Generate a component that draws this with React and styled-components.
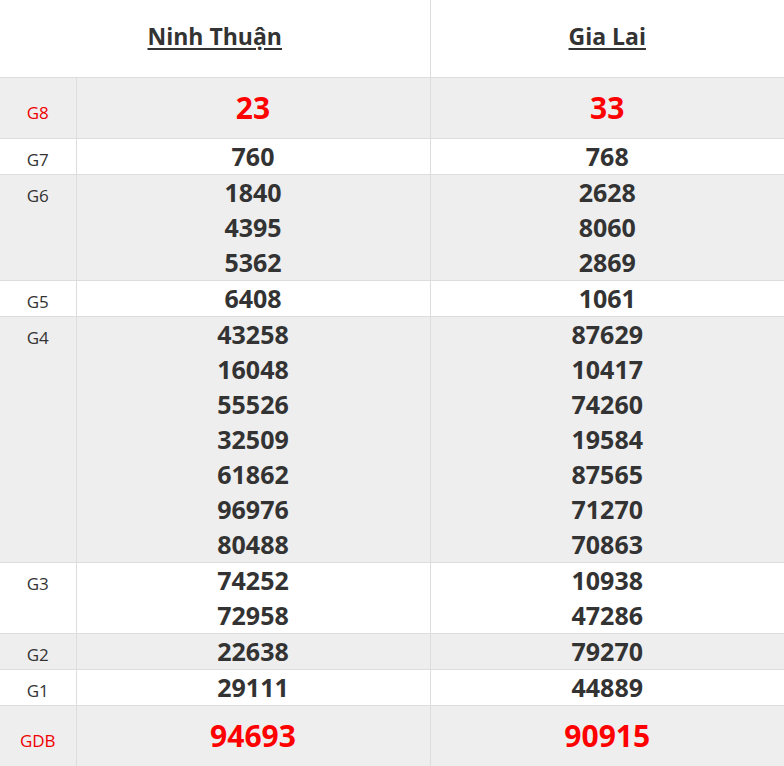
import React from 'react'
import styled, {createGlobalStyle} from 'styled-components'

// ====================== STYLED COMPONENTS ======================
const GlobalStyle = createGlobalStyle`
  html, body {
    margin: 0;
    padding: 0;
    background: #fff;
  }
  body {
    font-family: 'Open Sans', 'Liberation Sans', sans-serif;
    color: #333;
  }
`

const ResultTable = styled.table`
  width: 784px;
  border-collapse: collapse;
  table-layout: fixed;
`

const HeadCell = styled.th`
  height: 71px;
  padding: 0 0 6px;
  text-align: center;
  vertical-align: middle;
  font-size: 23px;
  font-weight: 700;
  color: #333;
  border-right: ${(p) => (p.$last ? 'none' : '1px solid #ddd')};
`

const Province = styled.span`
  text-decoration: underline;
  text-decoration-thickness: 2px;
  text-underline-offset: 3px;
  cursor: pointer;
`

const Row = styled.tr`
  background: ${(p) => (p.$shade ? '#eee' : '#fff')};
  border-top: 1px solid #ddd;
`

const Label = styled.td`
  padding: 0;
  text-align: center;
  vertical-align: baseline;
  font-size: 17px;
  line-height: 20px;
  color: ${(p) => (p.$hot ? '#e00' : '#333')};
  border-right: 1px solid #ddd;
`

const NumCell = styled.td`
  padding: 0;
  text-align: center;
  vertical-align: baseline;
  border-right: ${(p) => (p.$last ? 'none' : '1px solid #ddd')};
`

const Num = styled.div`
  font-weight: 700;
  font-size: ${(p) => (p.$hot ? '30px' : '25px')};
  line-height: ${(p) => (p.$hot ? '60px' : '35px')};
  color: ${(p) => (p.$hot ? '#f00' : '#333')};
`
// ===============================================================

const prizes = [
  {name: 'G8', hot: true, a: ['23'], b: ['33']},
  {name: 'G7', a: ['760'], b: ['768']},
  {name: 'G6', a: ['1840', '4395', '5362'], b: ['2628', '8060', '2869']},
  {name: 'G5', a: ['6408'], b: ['1061']},
  {
    name: 'G4',
    a: ['43258', '16048', '55526', '32509', '61862', '96976', '80488'],
    b: ['87629', '10417', '74260', '19584', '87565', '71270', '70863'],
  },
  {name: 'G3', a: ['74252', '72958'], b: ['10938', '47286']},
  {name: 'G2', a: ['22638'], b: ['79270']},
  {name: 'G1', a: ['29111'], b: ['44889']},
  {name: 'GDB', hot: true, a: ['94693'], b: ['90915']},
]

export default function App() {
  return (
    <>
      <GlobalStyle />
      <ResultTable>
        <colgroup>
          <col style={{width: 76}} />
          <col />
          <col />
        </colgroup>
        <thead>
          <tr>
            <HeadCell colSpan={2}>
              <Province>Ninh Thuận</Province>
            </HeadCell>
            <HeadCell $last>
              <Province>Gia Lai</Province>
            </HeadCell>
          </tr>
        </thead>
        <tbody>
          {prizes.map((p, i) => (
            <Row key={p.name} $shade={i % 2 === 0}>
              <Label $hot={p.hot}>{p.name}</Label>
              <NumCell>
                {p.a.map((n) => (
                  <Num key={n} $hot={p.hot}>
                    {n}
                  </Num>
                ))}
              </NumCell>
              <NumCell $last>
                {p.b.map((n) => (
                  <Num key={n} $hot={p.hot}>
                    {n}
                  </Num>
                ))}
              </NumCell>
            </Row>
          ))}
        </tbody>
      </ResultTable>
    </>
  )
}
